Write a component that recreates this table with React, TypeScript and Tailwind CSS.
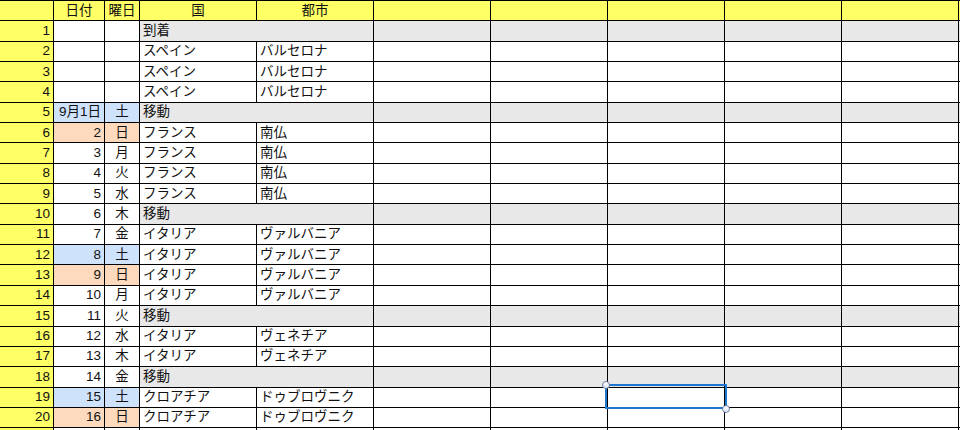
import React from "react";

type Row = {
  date?: string;
  day?: string;
  country?: string;
  city?: string;
  move?: string;
  tone?: "blue" | "peach";
};

const rows: Row[] = [
  { move: "到着" },
  { country: "スペイン", city: "バルセロナ" },
  { country: "スペイン", city: "バルセロナ" },
  { country: "スペイン", city: "バルセロナ" },
  { date: "9月1日", day: "土", move: "移動", tone: "blue" },
  { date: "2", day: "日", country: "フランス", city: "南仏", tone: "peach" },
  { date: "3", day: "月", country: "フランス", city: "南仏" },
  { date: "4", day: "火", country: "フランス", city: "南仏" },
  { date: "5", day: "水", country: "フランス", city: "南仏" },
  { date: "6", day: "木", move: "移動" },
  { date: "7", day: "金", country: "イタリア", city: "ヴァルバニア" },
  { date: "8", day: "土", country: "イタリア", city: "ヴァルバニア", tone: "blue" },
  { date: "9", day: "日", country: "イタリア", city: "ヴァルバニア", tone: "peach" },
  { date: "10", day: "月", country: "イタリア", city: "ヴァルバニア" },
  { date: "11", day: "火", move: "移動" },
  { date: "12", day: "水", country: "イタリア", city: "ヴェネチア" },
  { date: "13", day: "木", country: "イタリア", city: "ヴェネチア" },
  { date: "14", day: "金", move: "移動" },
  { date: "15", day: "土", country: "クロアチア", city: "ドゥブロヴニク", tone: "blue" },
  { date: "16", day: "日", country: "クロアチア", city: "ドゥブロヴニク", tone: "peach" },
];

const cell = "h-full border-r border-b border-black flex items-center shrink-0 overflow-hidden whitespace-nowrap";
const extra = [0, 1, 2, 3, 4, 5];

function toneBg(tone?: "blue" | "peach") {
  if (tone === "blue") return "bg-[#cfe2fb]";
  if (tone === "peach") return "bg-[#fdd9bd]";
  return "bg-white";
}

export default function App() {
  return (
    <div
      className="relative w-[960px] h-[430px] overflow-hidden bg-white text-[13.5px] text-[#111]"
      style={{ fontFamily: '"Liberation Sans", "Noto Sans CJK JP", sans-serif' }}
    >
      <div className="border-t border-black">
        {/* header */}
        <div className="flex h-[20.35px]">
          <div className={`${cell} w-[54px] bg-[#ffff66]`} />
          <div className={`${cell} w-[51px] bg-[#ffff66] justify-center`}>日付</div>
          <div className={`${cell} w-[35px] bg-[#ffff66] justify-center`}>曜日</div>
          <div className={`${cell} w-[117px] bg-[#ffff66] justify-center`}>国</div>
          <div className={`${cell} w-[117px] bg-[#ffff66] justify-center`}>都市</div>
          {extra.map((i) => (
            <div key={i} className={`${cell} w-[117px] bg-[#ffff66]`} />
          ))}
        </div>

        {rows.map((r, idx) => (
          <div key={idx} className="flex h-[20.35px]">
            <div className={`${cell} w-[54px] bg-[#ffff66] justify-end pr-[3px]`}>{idx + 1}</div>
            <div className={`${cell} w-[51px] ${toneBg(r.tone)} justify-end pr-[3px]`}>{r.date}</div>
            <div className={`${cell} w-[35px] ${toneBg(r.tone)} justify-center`}>{r.day}</div>
            {r.move !== undefined ? (
              <>
                <div className={`${cell} w-[234px] bg-[#e8e8e8] pl-[3px]`}>{r.move}</div>
                {extra.map((i) => (
                  <div key={i} className={`${cell} w-[117px] bg-[#e8e8e8]`} />
                ))}
              </>
            ) : (
              <>
                <div className={`${cell} w-[117px] pl-[3px]`}>{r.country}</div>
                <div className={`${cell} w-[117px] pl-[3px]`}>{r.city}</div>
                {extra.map((i) => (
                  <div key={i} className={`${cell} w-[117px]`} />
                ))}
              </>
            )}
          </div>
        ))}

        {/* partial next row */}
        <div className="flex h-[20.35px]">
          <div className={`${cell} w-[54px] bg-[#ffff66]`} />
          <div className={`${cell} w-[51px]`} />
          <div className={`${cell} w-[35px]`} />
          <div className={`${cell} w-[117px]`} />
          <div className={`${cell} w-[117px]`} />
          {extra.map((i) => (
            <div key={i} className={`${cell} w-[117px]`} />
          ))}
        </div>
      </div>

      {/* selection */}
      <div className="absolute left-[605px] top-[384px] w-[122px] h-[25px] border-2 border-[#1f77d0]" />
      <div className="absolute left-[602px] top-[381px] w-[8px] h-[8px] rounded-full border border-[#6d7fa6] bg-gradient-to-b from-white to-[#dfe4ee]" />
      <div className="absolute left-[722px] top-[405px] w-[8px] h-[8px] rounded-full border border-[#6d7fa6] bg-gradient-to-b from-white to-[#dfe4ee]" />
    </div>
  );
}
